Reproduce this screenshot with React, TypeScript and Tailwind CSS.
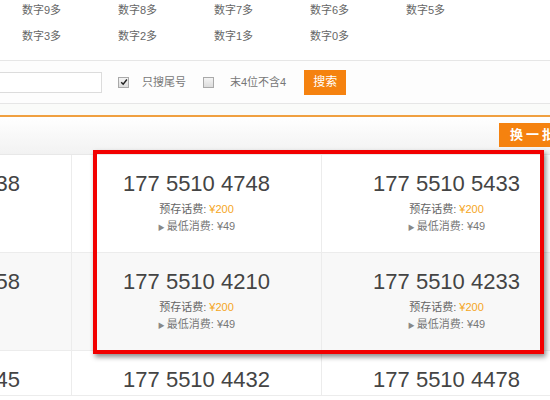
import React from 'react'

const row1 = ['数字9多', '数字8多', '数字7多', '数字6多', '数字5多']
const row2 = ['数字3多', '数字2多', '数字1多', '数字0多']

const rows = [
  { bg: 'bg-white', nums: ['177 5510 4738', '177 5510 4748', '177 5510 5433'] },
  { bg: 'bg-[#f8f8f8]', nums: ['177 5510 4258', '177 5510 4210', '177 5510 4233'] },
  { bg: 'bg-white', nums: ['177 5510 4345', '177 5510 4432', '177 5510 4478'] },
]

function Box({ checked }: { checked?: boolean }) {
  return (
    <span className="flex h-[11px] w-[11px] items-center justify-center border border-[#a9a9a9] bg-gradient-to-b from-[#f4f4f4] to-[#dcdcdc]">
      {checked && (
        <svg viewBox="0 0 10 10" className="h-[8px] w-[8px]">
          <path d="M1.5 5.2 L4 7.8 L8.6 1.8" fill="none" stroke="#222" strokeWidth="1.8" />
        </svg>
      )}
    </span>
  )
}

function Cell({ num, last }: { num: string; last?: boolean }) {
  return (
    <div className={`border-b border-r border-[#ececec] pt-[16px] text-center ${last ? 'h-[45px]' : 'h-[98px]'}`}>
      <div className="text-[22px] leading-[26px] text-[#444]">{num}</div>
      {!last && (
        <>
          <div className="mt-[4px] text-[11px] leading-[17px] text-[#666]">
            预存话费: <span className="text-[#f5a623]">¥200</span>
          </div>
          <div className="text-[11px] leading-[17px] text-[#777]">
            <span className="mr-[2px] text-[7px] text-[#888]">▶</span>最低消费: ¥49
          </div>
        </>
      )}
    </div>
  )
}

export default function App() {
  return (
    <div
      className="relative h-[400px] w-[550px] overflow-hidden bg-white"
      style={{ fontFamily: '"Liberation Sans", "Noto Sans CJK SC", sans-serif' }}
    >
      <div className="h-[61px] border-b border-[#e6e6e6] pl-[22px] text-[11px] text-[#666]">
        <div className="flex leading-[20px]">
          {row1.map(t => (
            <span key={t} className="w-[96px]">{t}</span>
          ))}
        </div>
        <div className="flex leading-[32px]">
          {row2.map(t => (
            <span key={t} className="w-[96px]">{t}</span>
          ))}
        </div>
      </div>

      <div className="flex h-[43px] items-center border-b border-[#e6e6e6] bg-[#fdfdfd] text-[11px] text-[#777]">
        <input className="-ml-[10px] h-[21px] w-[112px] border border-[#dcdcdc] bg-white" />
        <span className="ml-[16px]"><Box checked /></span>
        <span className="ml-[13px]">只搜尾号</span>
        <span className="ml-[17px]"><Box /></span>
        <span className="ml-[16px]">末4位不含4</span>
        <button className="ml-[18px] h-[25px] w-[42px] bg-[#f5820f] text-[12px] text-white">搜索</button>
      </div>

      <div className="h-[11px] bg-[#fafbf9]" />
      <div className="h-[2px] bg-[#f0a040]" />

      <div className="flex h-[38px] justify-end border-b border-[#e8e8e8] bg-gradient-to-b from-white to-[#f2f2f2]">
        <button className="-mr-[26px] mt-[6px] h-[24px] w-[77px] bg-[#f5820f] pl-[11px] text-left text-[13px] font-bold tracking-[3px] text-white">
          换一批
        </button>
      </div>

      <div className="-ml-[178px] grid w-[750px] grid-cols-3">
        {rows.map((r, i) =>
          r.nums.map(n => (
            <div key={n} className={r.bg}>
              <Cell num={n} last={i === 2} />
            </div>
          ))
        )}
      </div>

      <div className="absolute left-[93px] top-[150px] h-[204px] w-[451px] border-[4px] border-[#f20000] shadow-[2px_3px_5px_rgba(0,0,0,0.45)]" />
    </div>
  )
}
